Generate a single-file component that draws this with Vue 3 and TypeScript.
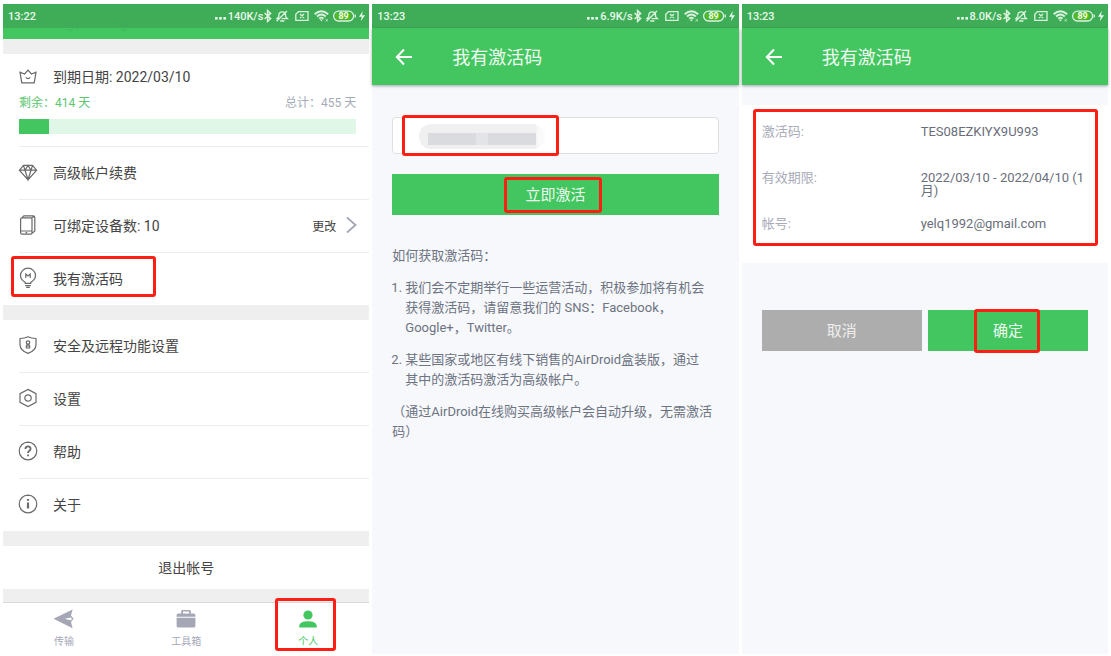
<script setup lang="ts">
import { ref, computed } from 'vue'

type IconName = 'crown' | 'diamond' | 'devices' | 'bulb' | 'shield' | 'gear' | 'help' | 'info'

interface MenuItem {
  icon: IconName
  label: string
  action?: string
  marked?: boolean
}

const totalDays = 455
const daysLeft = 414
const usedWidth = computed(() => `${Math.round(((totalDays - daysLeft) / totalDays) * 100)}%`)

const groups: MenuItem[][] = [
  [
    { icon: 'diamond', label: '高级帐户续费' },
    { icon: 'devices', label: '可绑定设备数: 10', action: '更改' },
    { icon: 'bulb', label: '我有激活码', marked: true },
  ],
  [
    { icon: 'shield', label: '安全及远程功能设置' },
    { icon: 'gear', label: '设置' },
    { icon: 'help', label: '帮助' },
    { icon: 'info', label: '关于' },
  ],
]

const iconPaths: Record<IconName, string> = {
  crown: 'M1 4.2 L2.8 14.8 H15.2 L17 4.2 L12.4 6 L9 2.2 L5.6 6 Z M6.8 9.4 Q9 11.8 11.2 9.4',
  diamond: 'M4.5 2.4 H13.5 L17.6 7.2 L9 16.8 L.4 7.2 Z M.4 7.2 H17.6 M4.5 2.4 L6 7.2 L9 16.8 L12 7.2 L13.5 2.4 M6 7.2 L9 2.4 L12 7.2',
  devices: 'M3 1.8 H11.6 Q13 1.8 13 3.2 V16.8 Q13 18.2 11.6 18.2 H3 Q1.6 18.2 1.6 16.8 V3.2 Q1.6 1.8 3 1.8 Z M1.6 15 H13 M6.6 16.6 H8.2 M3 1.6 L4.8 -.2 H14.2 Q15.8 -.2 15.8 1.4 V15 L13 17.4 M12.6 2 L15 .4',
  bulb: 'M6.2 14.4 V13.2 C3.3 11.7 1.5 9.4 1.5 6.5 A7.5 7.3 0 0 1 16.5 6.5 C16.5 9.4 14.7 11.7 11.8 13.2 V14.4 Z M6.2 16.6 H11.8 M7.2 18.4 H10.8 M6.8 9 V5 L9 7 L11.2 5 V9',
  shield: 'M9 .8 C11.5 2 14 2.4 17 2.5 V8.5 C17 13 13.5 15.8 9 17.4 C4.5 15.8 1 13 1 8.5 V2.5 C4 2.4 6.5 2 9 .8 Z M9 4.8 A1.7 1.7 0 0 1 9 8.2 A1.7 1.7 0 0 1 9 4.8 M7.4 12 V9.6 Q9 7 10.6 9.6 V12 Z M9 9.5 V11',
  gear: 'M9 .4 L17 4.7 V13.3 L9 17.6 L1 13.3 V4.7 Z M9 5.8 A3.2 3.2 0 0 1 9 12.2 A3.2 3.2 0 0 1 9 5.8',
  help: 'M9 .2 A8.8 8.8 0 0 1 9 17.8 A8.8 8.8 0 0 1 9 .2',
  info: 'M9 .2 A8.8 8.8 0 0 1 9 17.8 A8.8 8.8 0 0 1 9 .2',
}

const screens = [
  { time: '13:22', speed: '140K/s' },
  { time: '13:23', speed: '6.9K/s' },
  { time: '13:23', speed: '8.0K/s' },
]

const details = [
  { label: '激活码:', value: 'TES08EZKIYX9U993' },
  { label: '有效期限:', value: '2022/03/10 - 2022/04/10 (1月)' },
  { label: '帐号:', value: 'yelq1992@gmail.com' },
]

const code = ref('')
</script>

<template>
  <main class="page" lang="zh-CN">
    <section v-for="(screen, index) in screens" :key="index" class="screen" :class="{ tinted: index > 0 }">
      <div class="status">
        <span>{{ screen.time }}</span>
        <div class="status-right">
          <svg class="dots" width="12" height="12" viewBox="0 0 12 12" fill="#e9f8ec" aria-hidden="true">
            <rect y="7" width="2.6" height="2.6" /><rect x="4.2" y="7" width="2.6" height="2.6" /><rect x="8.4" y="7" width="2.6" height="2.6" />
          </svg>
          <span class="speed">{{ screen.speed }}</span>
          <svg class="status-icons" width="103" height="14" viewBox="0 0 103 14" fill="none" stroke="#dcf3e0" stroke-width="1.3" aria-hidden="true">
            <path d="M1.6 4 L7.6 9.6 L4.6 12.4 V1.6 L7.6 4.4 L1.6 10" stroke-width="1.5" />
            <path d="M15.6 9.6 H14 L15.8 7.8 V6 Q16 2.8 19.2 2.8 Q22.6 2.8 22.6 6 V7.8 L24.4 9.6 H18.6 M17.2 12 H21.4 M13.6 12.2 L24 2" />
            <path d="M35.5 2.6 H45 V11.4 H32.8 V5.2 Z M37 5 L41 9 M41 5 L37 9" />
            <path d="M51.6 5.2 Q58.4 -.6 65.2 5.2 M54 7.5 Q58.4 3.6 62.8 7.5 M56.2 9.7 Q58.4 7.6 60.6 9.7" stroke-width="1.8" />
            <path d="M56.8 10.5 H60 L58.4 12.4 Z" fill="#dcf3e0" stroke="none" />
            <path d="M62.6 10.3 L64.8 12.3 M64.8 10.3 L62.6 12.3" stroke-width=".8" />
            <rect x="70.6" y="2.2" width="20" height="9.8" rx="4.9" />
            <rect x="72.4" y="3.8" width="15.4" height="6.6" rx="3.3" fill="#56bd0c" stroke="none" />
            <path d="M92.2 5.6 V8.6" />
            <text x="80.6" y="10.3" text-anchor="middle" class="battery">89</text>
            <path d="M99.8 2 L96 7.8 H98.8 L97.8 12.2 L102 6.2 H99 Z" fill="#e9f8ec" stroke="none" />
          </svg>
        </div>
      </div>

      <template v-if="index === 0">
        <div class="profile-edge">
          <svg width="66" height="6" viewBox="0 0 66 6" fill="none" stroke="#3cba58" aria-hidden="true">
            <path d="M1 1 Q5 3 9 1 M12 0 V3 M56 0 Q58 4 62 1" />
          </svg>
        </div>
        <div class="band"></div>
        <div class="plan">
          <div class="plan-title">
            <svg class="icon" viewBox="0 0 18 18" aria-hidden="true"><path :d="iconPaths.crown" /></svg>
            <span>到期日期: 2022/03/10</span>
          </div>
          <div class="plan-days">
            <span class="left-days">剩余：{{ daysLeft }} 天</span>
            <span>总计：{{ totalDays }} 天</span>
          </div>
          <div class="bar" role="progressbar" aria-label="已用天数" :aria-valuenow="totalDays - daysLeft" aria-valuemin="0" :aria-valuemax="totalDays">
            <div class="bar-fill" :style="{ width: usedWidth }"></div>
          </div>
        </div>
        <template v-for="(group, g) in groups" :key="g">
          <ul class="menu">
            <li v-for="item in group" :key="item.label">
              <button type="button" class="row">
                <svg class="icon" viewBox="0 0 18 18" aria-hidden="true">
                  <path :d="iconPaths[item.icon]" />
                  <path v-if="item.icon === 'help'" d="M6.4 7 C6.4 3.6 11.6 3.6 11.6 6.8 C11.6 8.8 9 8.8 9 11 M9 12.4 V14.2" stroke-width="1.8" />
                  <path v-if="item.icon === 'info'" d="M9 4 V5.8 M9 7.6 V13.6" stroke-width="2.2" />
                </svg>
                <span class="row-label">{{ item.label }}</span>
                <span v-if="item.action" class="row-action">{{ item.action }}</span>
                <svg v-if="item.action" class="chevron" viewBox="0 0 11 18" aria-hidden="true"><path d="M1 1.5 L9.5 9 L1 16.5" /></svg>
              </button>
              <span v-if="item.marked" class="mark mark-row"></span>
            </li>
          </ul>
          <div class="band"></div>
        </template>
        <button type="button" class="logout">退出帐号</button>
        <div class="filler"></div>
        <nav class="tabs">
          <button type="button" class="tab">
            <svg width="20" height="20" viewBox="0 0 20 20" fill="#a5a7b7" aria-hidden="true">
              <path d="M-.6 9.8 L18.6 .4 L17 6.6 L19.6 9.8 L17 13 L18.6 19.2 Z" />
              <path d="M11 9.8 Q14 8.6 17.2 8.4 Q18.4 9.8 17.2 11.2 Q14 11 11 9.8 Z" fill="#fff" />
            </svg>
            <span>传输</span>
          </button>
          <button type="button" class="tab">
            <svg width="20" height="20" viewBox="0 0 20 20" fill="#a5a7b7" aria-hidden="true">
              <path d="M5.2 4.4 V2.2 Q5.2 1 6.4 1 H13.6 Q14.8 1 14.8 2.2 V4.4 H17.6 Q19.4 4.4 19.4 6.2 V7.8 H.6 V6.2 Q.6 4.4 2.4 4.4 Z M7 4.4 H13 V2.6 H7 Z" fill-rule="evenodd" />
              <path d="M.6 8.8 H19.4 V17 Q19.4 18.6 17.8 18.6 H2.2 Q.6 18.6 .6 17 Z" />
            </svg>
            <span>工具箱</span>
          </button>
          <button type="button" class="tab active">
            <svg width="20" height="20" viewBox="0 0 20 20" fill="#43c660" aria-hidden="true">
              <circle cx="10" cy="6" r="4.6" />
              <path d="M1.2 18.6 V17 Q1.5 12.2 10 12.2 Q18.5 12.2 18.8 17 V18.6 Z" />
            </svg>
            <span>个人</span>
            <span class="mark mark-tab"></span>
          </button>
        </nav>
      </template>

      <template v-else>
        <header class="appbar">
          <button type="button" class="back" aria-label="返回">
            <svg width="18" height="18" viewBox="0 0 18 18" fill="none" stroke="#fff" stroke-width="2" aria-hidden="true">
              <path d="M17 9 H2 M9 1.5 L1.8 9 L9 16.5" />
            </svg>
          </button>
          <h1>我有激活码</h1>
        </header>

        <form v-if="index === 1" class="activate" @submit.prevent>
          <div class="field">
            <input v-model="code" type="text" aria-label="激活码" />
            <div class="redacted">
              <i></i><i></i><i></i>
            </div>
            <span class="mark mark-field"></span>
          </div>
          <button type="submit" class="btn">立即激活<span class="mark mark-submit"></span></button>
          <div class="guide">
            <p>如何获取激活码：</p>
            <ol>
              <li>我们会不定期举行一些运营活动，积极参加将有机会获得激活码，请留意我们的 SNS：Facebook，Google+，Twitter。</li>
              <li>某些国家或地区有线下销售的AirDroid盒装版，通过其中的激活码激活为高级帐户。</li>
            </ol>
            <p>（通过AirDroid在线购买高级帐户会自动升级，无需激活码）</p>
          </div>
        </form>

        <template v-else>
          <dl class="details">
            <div v-for="d in details" :key="d.label" class="detail">
              <dt>{{ d.label }}</dt>
              <dd>{{ d.value }}</dd>
            </div>
            <span class="mark mark-details"></span>
          </dl>
          <div class="actions">
            <button type="button" class="btn cancel">取消</button>
            <button type="button" class="btn">确定<span class="mark mark-ok"></span></button>
          </div>
        </template>
      </template>
    </section>
  </main>
</template>

<style>
body {
  background: #fff;
}
</style>

<style scoped>
.page {
  box-sizing: border-box;
  min-height: 100vh;
  padding: 4px 3px 2px;
  display: grid;
  grid-template-columns: repeat(3, minmax(0, 1fr));
  gap: 3px;
  font-family: Roboto, "Noto Sans CJK SC", sans-serif;
  font-size: 14px;
  color: #444;
}
.screen {
  display: flex;
  flex-direction: column;
  background: #fff;
}
.screen.tinted {
  background: #f6f8fc;
}
button {
  font: inherit;
  color: inherit;
  border: 0;
  padding: 0;
  background: none;
  cursor: pointer;
}
.status {
  height: 24px;
  padding: 0 3px 0 5px;
  display: flex;
  align-items: center;
  justify-content: space-between;
  background: #3fad57;
  color: #e9f8ec;
  font-size: 11px;
  font-weight: 500;
}
.status-right {
  display: flex;
  align-items: center;
}
.dots {
  margin-right: 1px;
}
.battery {
  font-size: 9px;
  font-weight: 700;
  fill: #f2fbf3;
  stroke: none;
}
.profile-edge {
  height: 11px;
  padding-left: 62px;
  background: #43c660;
  line-height: 0;
}
.band {
  height: 15px;
  background: #efefef;
}
.plan {
  margin-left: 16px;
  padding: 13px 0 12px;
  border-bottom: 1px solid #ececec;
  display: flex;
  flex-direction: column;
  gap: 8px;
}
.plan-title {
  display: flex;
  align-items: center;
  gap: 16px;
  line-height: 20px;
}
.plan-days {
  display: flex;
  justify-content: space-between;
  margin-right: 13px;
  font-size: 12px;
  line-height: 16px;
  color: #a5acb8;
}
.left-days {
  color: #5cc670;
}
.bar {
  height: 15px;
  margin-right: 13px;
  background: #e0f6e6;
}
.bar-fill {
  height: 100%;
  background: #43c660;
}
.icon {
  width: 18px;
  height: 18px;
  flex: none;
  overflow: visible;
  fill: none;
  stroke: #6a6a6a;
  stroke-width: 1.2;
}
.menu {
  list-style: none;
  margin: 0;
  padding: 0 0 0 16px;
}
.menu li {
  position: relative;
}
.menu li + li {
  border-top: 1px solid #ececec;
}
.row {
  box-sizing: border-box;
  width: 100%;
  height: 52px;
  padding: 0 12px 2px 0;
  display: flex;
  align-items: center;
  gap: 16px;
  text-align: left;
}
.row-label {
  flex: 1;
}
.row-action {
  font-size: 12px;
  margin-right: -6px;
}
.chevron {
  width: 11px;
  height: 18px;
  fill: none;
  stroke: #a3a6b8;
  stroke-width: 1.8;
}
.logout {
  height: 43px;
  padding-bottom: 2px;
}
.filler {
  flex: 1;
  min-height: 12px;
  background: #efefef;
}
.tabs {
  display: grid;
  grid-template-columns: repeat(3, 1fr);
  border-top: 1px solid #d9d9d9;
}
.tab {
  position: relative;
  height: 51px;
  padding-top: 2px;
  display: flex;
  flex-direction: column;
  align-items: center;
  justify-content: center;
  gap: 5px;
  font-size: 10px;
  line-height: 16px;
  color: #a5a7b7;
}
.tab.active {
  color: #43c660;
}
.appbar {
  box-sizing: border-box;
  height: 57px;
  padding-left: 23px;
  display: flex;
  align-items: center;
  gap: 39px;
  background: #43c660;
  color: #f0fbf2;
  box-shadow: 0 1px 3px rgba(0, 0, 0, 0.35);
}
.back {
  line-height: 0;
}
h1 {
  margin: 0;
  padding-bottom: 2px;
  font-size: 18px;
  font-weight: 400;
}
.activate {
  padding: 32px 20px 20px;
  display: flex;
  flex-direction: column;
}
.field {
  position: relative;
  margin-bottom: 20px;
  display: flex;
}
.field input {
  box-sizing: border-box;
  width: 100%;
  height: 37px;
  padding: 0 24px;
  border: 1px solid #dedfe1;
  border-radius: 4px;
  background: #fff;
  font: inherit;
}
.redacted {
  position: absolute;
  left: 27px;
  top: 7px;
  box-sizing: border-box;
  width: 126px;
  height: 25px;
  padding: 9px 9px 4px;
  display: flex;
  border-radius: 12px;
  background: linear-gradient(90deg, #f0f0f1 92%, #fafafa 95%);
}
.redacted i {
  flex: 4;
  background: #dadbdf;
}
.redacted i:nth-child(2) {
  flex: 1;
  background: #e3e4e8;
}
.btn {
  position: relative;
  flex: 1;
  box-sizing: border-box;
  min-height: 41px;
  padding-bottom: 2px;
  background: #43c660;
  color: #eefaf0;
  font-size: 15px;
}
.btn.cancel {
  background: #adadad;
  color: #eee;
}
.guide {
  margin-top: 31px;
  display: flex;
  flex-direction: column;
  gap: 12px;
  font-size: 13px;
  line-height: 20px;
  color: #6d7380;
}
.guide p {
  margin: 0;
}
.guide ol {
  margin: 0;
  padding: 0 12px 0 13px;
  display: flex;
  flex-direction: column;
  gap: 12px;
}
.details {
  position: relative;
  margin: 20px 0 0;
  padding: 20px 16px 0 20px;
  background: #fff;
}
.detail {
  min-height: 46px;
  display: grid;
  grid-template-columns: 159px 1fr;
  font-size: 13px;
  line-height: 13px;
}
.detail dt {
  color: #a9abb9;
}
.detail dd {
  margin: 0;
  color: #6a6e7a;
}
.actions {
  margin: 47px 20px 20px;
  display: flex;
  gap: 6px;
}
.mark {
  position: absolute;
  box-sizing: border-box;
  border: 3px solid #ff1e14;
  border-radius: 3px;
  pointer-events: none;
}
.mark-row {
  left: -8px;
  top: 3px;
  width: 145px;
  height: 41px;
}
.mark-tab {
  left: calc(50% - 33px);
  top: -5px;
  width: 61px;
  height: 53px;
}
.mark-field {
  left: 10px;
  top: -2px;
  width: 157px;
  height: 41px;
}
.mark-submit {
  left: calc(50% - 51px);
  top: 3px;
  width: 98px;
  height: 36px;
}
.mark-details {
  left: 11px;
  right: 10px;
  top: 4px;
  bottom: 17px;
}
.mark-ok {
  left: calc(50% - 34px);
  top: -1px;
  width: 66px;
  height: 44px;
}
</style>
